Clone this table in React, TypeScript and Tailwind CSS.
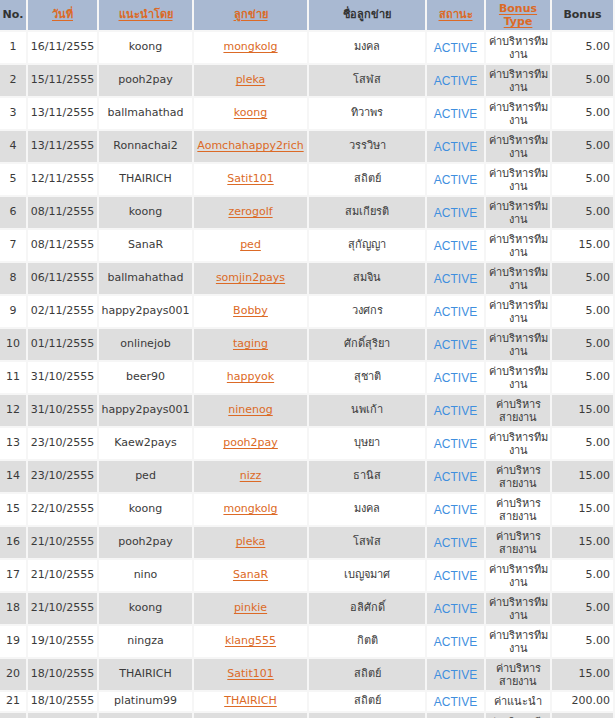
import React from "react";

type Row = {
  no: number;
  date: string;
  referrer: string;
  member: string;
  name: string;
  type: "team" | "line" | "ref";
  bonus: string;
};

const rows: Row[] = [
  { no: 1, date: "16/11/2555", referrer: "koong", member: "mongkolg", name: "มงคล", type: "team", bonus: "5.00" },
  { no: 2, date: "15/11/2555", referrer: "pooh2pay", member: "pleka", name: "โสฬส", type: "team", bonus: "5.00" },
  { no: 3, date: "13/11/2555", referrer: "ballmahathad", member: "koong", name: "ทิวาพร", type: "team", bonus: "5.00" },
  { no: 4, date: "13/11/2555", referrer: "Ronnachai2", member: "Aomchahappy2rich", name: "วรรวิษา", type: "team", bonus: "5.00" },
  { no: 5, date: "12/11/2555", referrer: "THAIRICH", member: "Satit101", name: "สถิตย์", type: "team", bonus: "5.00" },
  { no: 6, date: "08/11/2555", referrer: "koong", member: "zerogolf", name: "สมเกียรติ", type: "team", bonus: "5.00" },
  { no: 7, date: "08/11/2555", referrer: "SanaR", member: "ped", name: "สุกัญญา", type: "team", bonus: "15.00" },
  { no: 8, date: "06/11/2555", referrer: "ballmahathad", member: "somjin2pays", name: "สมจิน", type: "team", bonus: "5.00" },
  { no: 9, date: "02/11/2555", referrer: "happy2pays001", member: "Bobby", name: "วงศกร", type: "team", bonus: "5.00" },
  { no: 10, date: "01/11/2555", referrer: "onlinejob", member: "taging", name: "ศักดิ์สุริยา", type: "team", bonus: "5.00" },
  { no: 11, date: "31/10/2555", referrer: "beer90", member: "happyok", name: "สุชาติ", type: "team", bonus: "5.00" },
  { no: 12, date: "31/10/2555", referrer: "happy2pays001", member: "ninenog", name: "นพเก้า", type: "line", bonus: "15.00" },
  { no: 13, date: "23/10/2555", referrer: "Kaew2pays", member: "pooh2pay", name: "บุษยา", type: "team", bonus: "5.00" },
  { no: 14, date: "23/10/2555", referrer: "ped", member: "nizz", name: "ธานิส", type: "line", bonus: "15.00" },
  { no: 15, date: "22/10/2555", referrer: "koong", member: "mongkolg", name: "มงคล", type: "line", bonus: "15.00" },
  { no: 16, date: "21/10/2555", referrer: "pooh2pay", member: "pleka", name: "โสฬส", type: "line", bonus: "15.00" },
  { no: 17, date: "21/10/2555", referrer: "nino", member: "SanaR", name: "เบญจมาศ", type: "team", bonus: "5.00" },
  { no: 18, date: "21/10/2555", referrer: "koong", member: "pinkie", name: "อลิศักดิ์", type: "team", bonus: "5.00" },
  { no: 19, date: "19/10/2555", referrer: "ningza", member: "klang555", name: "กิตติ", type: "team", bonus: "5.00" },
  { no: 20, date: "18/10/2555", referrer: "THAIRICH", member: "Satit101", name: "สถิตย์", type: "line", bonus: "15.00" },
  { no: 21, date: "18/10/2555", referrer: "platinum99", member: "THAIRICH", name: "สถิตย์", type: "ref", bonus: "200.00" },
  { no: 22, date: "17/10/2555", referrer: "koong", member: "mongkolg", name: "มงคล", type: "team", bonus: "5.00" },
];

const BonusType = ({ type }: { type: Row["type"] }) => {
  if (type === "ref") return <>ค่าแนะนำ</>;
  if (type === "line")
    return (
      <>
        ค่าบริหาร
        <br />
        สายงาน
      </>
    );
  return (
    <>
      ค่าบริหารทีม
      <br />
      งาน
    </>
  );
};

const link = "text-[#dc6a26] underline underline-offset-2";
const th = "border-r-2 border-b-2 border-[#f6f6f6] font-bold text-[#333] align-middle";
const td = "border-r-2 border-b-2 border-[#f6f6f6] align-middle";

export default function App() {
  return (
    <div
      className="w-[615px] h-[718px] overflow-hidden bg-white text-[#3a3a3a] text-[11px]"
      style={{ fontFamily: '"DejaVu Sans", Verdana, sans-serif' }}
    >
      <table className="table-fixed border-separate border-spacing-0 w-[615px]">
        <colgroup>
          <col className="w-[28px]" />
          <col className="w-[71px]" />
          <col className="w-[95px]" />
          <col className="w-[115px]" />
          <col className="w-[118px]" />
          <col className="w-[59px]" />
          <col className="w-[66px]" />
          <col className="w-[63px]" />
        </colgroup>
        <thead>
          <tr className="bg-[#a9b9d2] h-[32px]">
            <th className={th}>No.</th>
            <th className={th}>
              <span className={link}>วันที่</span>
            </th>
            <th className={th}>
              <span className={link}>แนะนำโดย</span>
            </th>
            <th className={th}>
              <span className={link}>ลูกข่าย</span>
            </th>
            <th className={th}>ชื่อลูกข่าย</th>
            <th className={th}>
              <span className={link}>สถานะ</span>
            </th>
            <th className={`${th} leading-[13px]`}>
              <span className={link}>
                Bonus
                <br />
                Type
              </span>
            </th>
            <th className={`${th} border-r-0`}>Bonus</th>
          </tr>
        </thead>
        <tbody>
          {rows.map((r) => (
            <tr
              key={r.no}
              className={`${r.no % 2 === 0 ? "bg-[#dedede]" : "bg-white"} ${r.type === "ref" ? "h-[21px]" : "h-[33px]"}`}
            >
              <td className={`${td} text-center`}>{r.no}</td>
              <td className={`${td} text-center`}>{r.date}</td>
              <td className={`${td} text-center`}>{r.referrer}</td>
              <td className={`${td} text-center`}>
                <a href="#" className={link}>
                  {r.member}
                </a>
              </td>
              <td className={`${td} text-center`}>{r.name}</td>
              <td
                className={`${td} text-center text-[#3f8fde] text-[12px]`}
                style={{ fontFamily: '"Liberation Sans", Arial, sans-serif' }}
              >
                ACTIVE
              </td>
              <td className={`${td} text-center leading-[13px]`}>
                <BonusType type={r.type} />
              </td>
              <td className={`${td} border-r-0 text-right pr-[3px]`}>{r.bonus}</td>
            </tr>
          ))}
        </tbody>
      </table>
    </div>
  );
}
